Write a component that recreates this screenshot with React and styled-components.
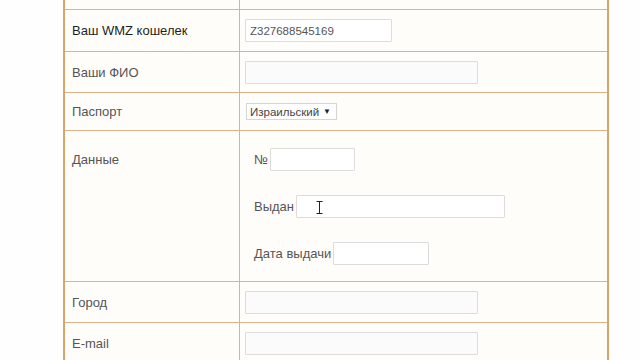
import React from 'react';
import styled, { createGlobalStyle } from 'styled-components';

const GlobalStyle = createGlobalStyle`
  html, body {
    margin: 0;
    padding: 0;
    background: #fefefe;
    overflow: hidden;
  }
  body {
    font-family: "Liberation Sans", Arial, sans-serif;
  }
`;

const Page = styled.div`
  width: 640px;
  height: 360px;
  overflow: hidden;
`;

const Table = styled.div`
  margin: -32px 0 0 63px;
  width: 542px;
  border-left: 2px solid #d9a468;
  border-right: 2px solid #d9a468;
  background: #fffdfa;
`;

const Row = styled.div`
  display: grid;
  grid-template-columns: 174px 1fr;
  height: ${(p) => p.$h}px;
  border-bottom: 1px solid #ddb48a;
  box-sizing: border-box;
`;

const Label = styled.div`
  display: flex;
  align-items: ${(p) => (p.$top ? 'flex-start' : 'center')};
  padding: ${(p) => (p.$top ? '21px 0 0 7px' : '0 0 0 7px')};
  font-size: 13px;
  color: ${(p) => (p.$dark ? '#1e1e1e' : '#555')};
`;

const Cell = styled.div`
  display: flex;
  align-items: center;
  padding-left: 5px;
  border-left: 1px solid #d8b48e;
`;

const Stack = styled.div`
  display: flex;
  flex-direction: column;
  gap: 24px;
  padding: 17px 0 0 14px;
  border-left: 1px solid #d8b48e;
`;

const Line = styled.label`
  display: flex;
  align-items: center;
  gap: 2px;
  font-size: 13px;
  color: #555;
`;

const InputWrap = styled.span`
  position: relative;
  display: inline-flex;
`;

const Input = styled.input`
  box-sizing: border-box;
  width: ${(p) => p.$w}px;
  height: 23px;
  padding: 0 4px;
  border: 1px solid #dcdcdc;
  border-radius: 1px;
  background: ${(p) => (p.$white ? '#fff' : '#fbfbfb')};
  font-family: "Liberation Sans", Arial, sans-serif;
  font-size: 11.5px;
  color: #555;
  outline: none;
`;

const Select = styled.div`
  box-sizing: border-box;
  display: flex;
  align-items: center;
  justify-content: space-between;
  width: 91px;
  height: 17px;
  margin-left: 1px;
  padding: 0 5px 0 3px;
  border: 1px solid #d6d6d6;
  background: #fff;
  font-size: 11.5px;
  color: #444;
`;

const Arrow = styled.span`
  font-size: 8px;
  color: #222;
`;

const Caret = styled.svg`
  position: absolute;
  left: 20px;
  top: 6px;
`;

const App = () => (
  <Page>
    <GlobalStyle />
    <Table>
      <Row $h={42}>
        <Label />
        <Cell>
          <Input $w={147} readOnly />
        </Cell>
      </Row>
      <Row $h={42}>
        <Label $dark>Ваш WMZ кошелек</Label>
        <Cell>
          <Input $w={147} $white defaultValue="Z327688545169" />
        </Cell>
      </Row>
      <Row $h={41}>
        <Label>Ваши ФИО</Label>
        <Cell>
          <Input $w={233} />
        </Cell>
      </Row>
      <Row $h={38}>
        <Label>Паспорт</Label>
        <Cell>
          <Select>
            Израильский <Arrow>▼</Arrow>
          </Select>
        </Cell>
      </Row>
      <Row $h={151}>
        <Label $top>Данные</Label>
        <Stack>
          <Line>
            №
            <Input $w={85} $white />
          </Line>
          <Line>
            Выдан
            <InputWrap>
              <Input $w={209} $white />
              <Caret width="7" height="13" viewBox="0 0 7 13">
                <path d="M0.5 0.5h6M3.5 0.5v12M0.5 12.5h6" stroke="#222" strokeWidth="1" fill="none" />
              </Caret>
            </InputWrap>
          </Line>
          <Line>
            Дата выдачи
            <Input $w={96} $white />
          </Line>
        </Stack>
      </Row>
      <Row $h={41}>
        <Label>Город</Label>
        <Cell>
          <Input $w={233} />
        </Cell>
      </Row>
      <Row $h={41}>
        <Label>E-mail</Label>
        <Cell>
          <Input $w={233} />
        </Cell>
      </Row>
    </Table>
  </Page>
);

export default App;
